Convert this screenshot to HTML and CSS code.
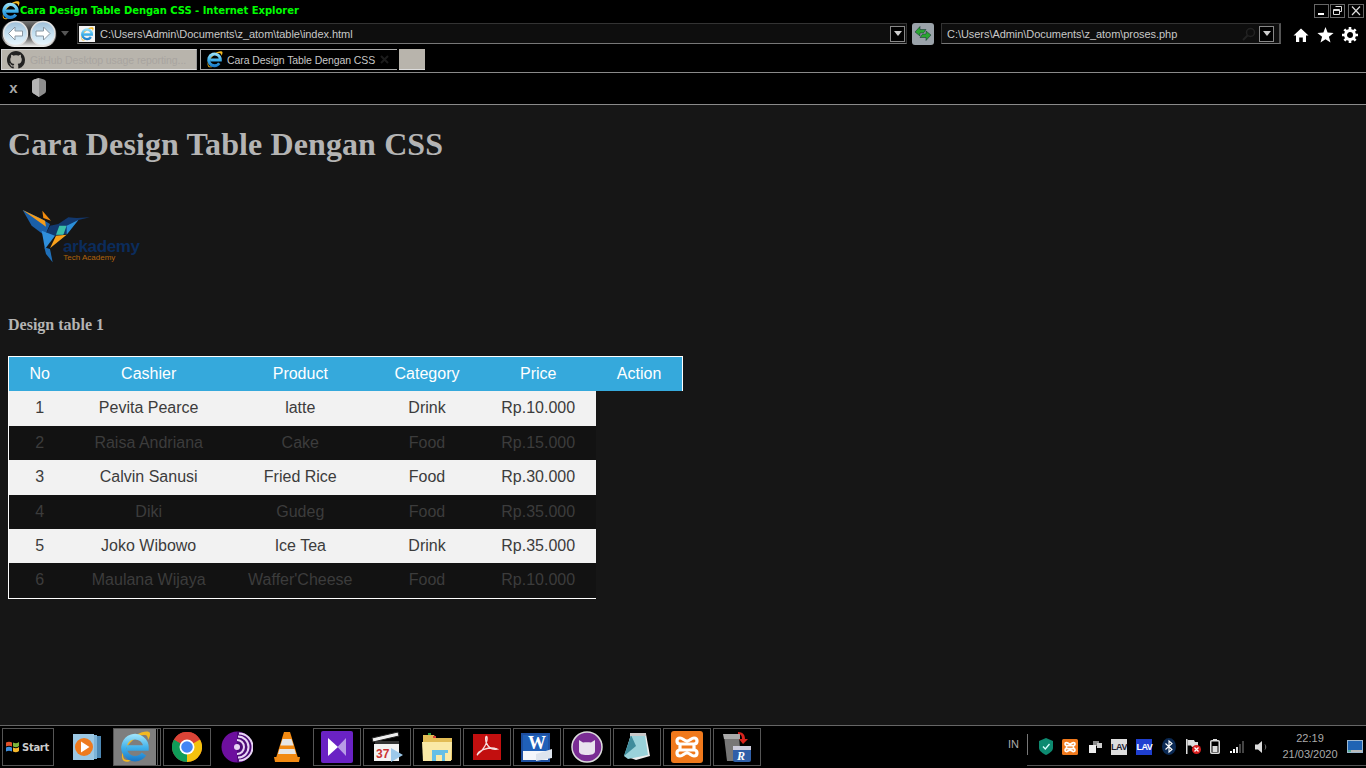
FILE: index.html
```html
<!DOCTYPE html>
<html lang="id">
<head>
<meta charset="utf-8">
<title>Cara Design Table Dengan CSS</title>
<link rel="stylesheet" href="styles.css">
</head>
<body>
<svg class="defs" width="0" height="0" aria-hidden="true">
  <defs>
    <linearGradient id="ieblue" gradientUnits="userSpaceOnUse" x1="0" y1="4" x2="0" y2="30"><stop offset="0" stop-color="#9be2fa"/><stop offset=".5" stop-color="#3fb0ea"/><stop offset="1" stop-color="#1a78c8"/></linearGradient>
    <linearGradient id="orb" x1="0" y1="0" x2="0" y2="1"><stop offset="0" stop-color="#9fbfd8"/><stop offset=".5" stop-color="#c4dff0"/><stop offset="1" stop-color="#eaf7ff"/></linearGradient>
    <linearGradient id="pill" x1="0" y1="0" x2="0" y2="1"><stop offset="0" stop-color="#777"/><stop offset=".5" stop-color="#222"/><stop offset="1" stop-color="#f2f2f2"/></linearGradient>
    <symbol id="ie" viewBox="0 0 32 32">
      <path d="M5 30 C1 27 3 19 9 11 C15 4 25 -1 30 1 C32 2 31 6 29 9 C29 6 28 4 26 4 C21 3 12 9 7 17 C4 22 3 27 6 28.500 C8 29.500 11 29 14 28 C10 31 7 31.500 5 30 Z" fill="#f2b821"/>
      <path d="M8 17 H27 A11 11 0 1 0 25 23" fill="none" stroke="url(#ieblue)" stroke-width="5.500"/>
    </symbol>
  </defs>
</svg>

<header class="titlebar">
  <svg class="title-icon" width="19" height="19"><use href="#ie"/></svg>
  <span class="title-text">Cara Design Table Dengan CSS - Internet Explorer</span>
  <div class="win-btns">
    <span class="win-btn"><svg width="13" height="12" viewBox="0 0 13 12"><rect x="3" y="8" width="6" height="2" fill="#fff"/></svg></span>
    <span class="win-btn"><svg width="13" height="12" viewBox="0 0 13 12"><path d="M4.500 1.500h6v5H8.500M2.500 4.500h6v5h-6z M2.500 5.500h6" fill="none" stroke="#ddd"/></svg></span>
    <span class="win-btn close"><svg width="14" height="12" viewBox="0 0 14 12"><path d="M3 1.500 L11 10 M11 1.500 L3 10" stroke="#ddd" stroke-width="1.200"/></svg></span>
  </div>
</header>

<nav class="navbar">
  <svg class="orbs" width="56" height="28" viewBox="0 0 56 28">
    <rect x=".5" y="1" width="55" height="26" rx="13" fill="url(#pill)"/>
    <circle cx="14.500" cy="13.500" r="12" fill="url(#orb)" stroke="#e4e4e4" stroke-width="1.500"/>
    <circle cx="42" cy="13.500" r="12" fill="url(#orb)" stroke="#e4e4e4" stroke-width="1.500"/>
    <path d="M7.500 13.500 L14 7 V11 H21.500 V16 H14 V20 Z" fill="#fff" stroke="#8a98a4" stroke-width="1"/>
    <path d="M49 13.500 L42.500 7 V11 H35 V16 H42.500 V20 Z" fill="#fff" stroke="#8a98a4" stroke-width="1"/>
  </svg>
  <svg class="nav-drop" width="8" height="5" viewBox="0 0 8 5"><path d="M0 0H8L4 5Z" fill="#555"/></svg>
  <div class="addr">
    <span class="page-icon"><svg width="14" height="14"><use href="#ie"/></svg></span>
    <span class="addr-text">C:\Users\Admin\Documents\z_atom\table\index.html</span>
    <span class="drop"><svg width="8" height="5" viewBox="0 0 8 5"><path d="M0 0H8L4 5Z" fill="#ccc"/></svg></span>
  </div>
  <span class="go">
    <svg width="20" height="20" viewBox="0 0 20 20"><path d="M2 8 L7 2.500 V5.500 H13 L10.500 9 H7 V12 Z" fill="#2aa632" stroke="#123" stroke-width=".5"/><path d="M18 11 L13 16.500 V13.500 H7 L9.500 10 H13 V7 Z" fill="#2aa632" stroke="#123" stroke-width=".5"/></svg>
  </span>
  <div class="search">
    <span class="search-text">C:\Users\Admin\Documents\z_atom\proses.php</span>
    <svg class="lens" width="14" height="14" viewBox="0 0 14 14"><circle cx="8.500" cy="5.500" r="4" fill="none" stroke="#222" stroke-width="1.500"/><path d="M5.500 8.500 L1 13" stroke="#222" stroke-width="2"/></svg>
    <span class="drop"><svg width="8" height="5" viewBox="0 0 8 5"><path d="M0 0H8L4 5Z" fill="#ccc"/></svg></span>
  </div>
  <div class="tools">
    <svg width="16" height="16" viewBox="0 0 16 16"><path d="M8 1.500 L15.500 8.500 H13 V15 H9.800 V10.500 H6.200 V15 H3 V8.500 H.5 Z" fill="#fff"/></svg>
    <svg width="17" height="16" viewBox="0 0 17 16"><path d="M8.500 0 L10.600 5.600 L16.600 5.900 L11.900 9.700 L13.500 15.500 L8.500 12.200 L3.500 15.500 L5.100 9.700 L.4 5.900 L6.400 5.600 Z" fill="#fff"/></svg>
    <svg width="16" height="16" viewBox="0 0 16 16"><circle cx="8" cy="8" r="4.500" fill="none" stroke="#fff" stroke-width="3"/><path d="M8 0V16M0 8H16M2.300 2.300L13.700 13.700M13.700 2.300L2.300 13.700" stroke="#fff" stroke-width="2.600" stroke-dasharray="3 10 3"/></svg>
  </div>
</nav>

<div class="tabs">
  <div class="tab inactive">
    <svg width="18" height="18" viewBox="0 0 16 16"><path fill="#222" d="M8 0C3.580 0 0 3.580 0 8c0 3.540 2.290 6.530 5.470 7.590.4.070.55-.17.55-.38 0-.19-.01-.82-.01-1.490-2.010.37-2.530-.49-2.690-.94-.09-.23-.48-.94-.82-1.130-.28-.15-.68-.52-.01-.53.63-.01 1.080.58 1.230.82.720 1.210 1.870.870 2.330.660.070-.520.280-.870.510-1.070-1.780-.2-3.640-.890-3.640-3.950 0-.870.310-1.590.820-2.150-.08-.2-.36-1.020.080-2.120 0 0 .670-.210 2.200.820.640-.180 1.320-.270 2-.270s1.360.090 2 .270c1.530-1.040 2.200-.820 2.200-.820.440 1.100.160 1.920.080 2.120.510.560.820 1.270.820 2.150 0 3.070-1.870 3.750-3.650 3.950.290.250.540.730.540 1.480 0 1.070-.010 1.930-.010 2.200 0 .210.150.460.550.380A8.010 8.010 0 0 0 16 8c0-4.420-3.580-8-8-8z"/></svg>
    <span class="tab-label">GitHub Desktop usage reporting...</span>
  </div>
  <div class="tab active">
    <svg width="17" height="17"><use href="#ie"/></svg>
    <span class="tab-label">Cara Design Table Dengan CSS</span>
    <svg class="tab-close" width="9" height="9" viewBox="0 0 9 9"><path d="M1 1L8 8M8 1L1 8" stroke="#1c1c1c" stroke-width="2"/></svg>
  </div>
  <div class="tab new"></div>
</div>

<div class="cmdbar">
  <span class="cmd-x">x</span>
  <svg width="14" height="19" viewBox="0 0 14 19"><path d="M7 0 L12 1.500 Q14 2.200 14 4 V13 Q14 14.500 12.500 15.500 L7 19 L1.500 15.500 Q0 14.500 0 13 V4 Q0 2.200 2 1.500 Z" fill="#8e8e8e"/><path d="M7 0 L2 1.500 Q0 2.200 0 4 V13 Q0 14.500 1.500 15.500 L7 19 Z" fill="#b4b4b4"/></svg>
</div>

<main class="page">
  <h1>Cara Design Table Dengan CSS</h1>
  <svg class="logo" width="150" height="112" viewBox="24 -30 450 336" role="img" aria-label="Arkademy">
    <polygon points="68,48 120,72 150,90 135,125 95,95" fill="#1a5fa8"/>
    <polygon points="68,48 135,80 138,98" fill="#f59c1a"/>
    <polygon points="127,50 153,80 130,72" fill="#f28c0f"/>
    <polygon points="150,95 175,90 205,70 230,72 270,70 235,78 200,120 168,125 135,125" fill="#12386e"/>
    <polygon points="178,95 200,95 190,122 168,122" fill="#3bbfa8"/>
    <polygon points="200,95 235,78 200,122" fill="#2b8fd8"/>
    <polygon points="168,125 200,122 150,163" fill="#f9a11b"/>
    <polygon points="125,110 165,125 135,165" fill="#2f8fdc"/>
    <polygon points="133,160 150,165 158,205 138,180" fill="#1f6fb8"/>
    <text class="logo-name" x="189" y="175">arkademy</text>
    <text class="logo-sub" x="190" y="198">Tech Academy</text>
  </svg>
  <h4>Design table 1</h4>
  <table class="data">
    <thead>
      <tr><th>No</th><th>Cashier</th><th>Product</th><th>Category</th><th>Price</th><th>Action</th></tr>
    </thead>
    <tbody>
      <tr><td>1</td><td>Pevita Pearce</td><td>latte</td><td>Drink</td><td>Rp.10.000</td></tr>
      <tr><td>2</td><td>Raisa Andriana</td><td>Cake</td><td>Food</td><td>Rp.15.000</td></tr>
      <tr><td>3</td><td>Calvin Sanusi</td><td>Fried Rice</td><td>Food</td><td>Rp.30.000</td></tr>
      <tr><td>4</td><td>Diki</td><td>Gudeg</td><td>Food</td><td>Rp.35.000</td></tr>
      <tr><td>5</td><td>Joko Wibowo</td><td>Ice Tea</td><td>Drink</td><td>Rp.35.000</td></tr>
      <tr><td>6</td><td>Maulana Wijaya</td><td>Waffer'Cheese</td><td>Food</td><td>Rp.10.000</td></tr>
    </tbody>
  </table>
</main>

<footer class="taskbar">
  <div class="task-left">
    <div class="start">
      <svg width="15" height="14" viewBox="0 0 15 14"><path d="M1 2.500 C3 1.500 5 1.500 7 2.500 V6.500 C5 5.500 3 5.500 1 6.500Z" fill="#e0522b"/><path d="M8 2.500 C10 3.500 12 3.500 14 2 V6 C12 7.500 10 7.500 8 6.500Z" fill="#7db63b"/><path d="M1 7.500 C3 6.500 5 6.500 7 7.500 V11.500 C5 10.500 3 10.500 1 11.500Z" fill="#3f8fdc"/><path d="M8 7.500 C10 8.500 12 8.500 14 7 V11 C12 12.500 10 12.500 8 11.500Z" fill="#f4b72c"/></svg>
      <span>Start</span>
    </div>
    <div class="slot first">
      <svg width="30" height="28" viewBox="0 0 30 28"><rect x="20" y="3" width="9" height="22" fill="#4d88b4"/><rect x="16" y="2" width="9" height="24" fill="#7eb4d8"/><rect x="1" y="1" width="21" height="26" fill="#9cc8e4"/><circle cx="12" cy="14" r="9" fill="#ee7a1e"/><path d="M9 8.500 L17.500 14 L9 19.500Z" fill="#fff"/></svg>
    </div>
    <div class="slot boxed current">
      <svg width="32" height="32"><use href="#ie"/></svg>
    </div>
    <div class="slot boxed">
      <svg width="30" height="30" viewBox="0 0 30 30"><circle cx="15" cy="15" r="15" fill="#db4437"/><path d="M15 15 L28 7.500 A15 15 0 0 1 15 30Z" fill="#f4c20d"/><path d="M15 15 L15 30 A15 15 0 0 1 2 7.500Z" fill="#0f9d58"/><path d="M2 7.500 A15 15 0 0 1 28 7.500 H15 A7.500 7.500 0 0 0 8.500 11.200Z" fill="#db4437"/><circle cx="15" cy="15" r="7.500" fill="#fff"/><circle cx="15" cy="15" r="5.800" fill="#4285f4"/></svg>
    </div>
    <div class="slot">
      <svg width="32" height="32" viewBox="0 0 32 32"><circle cx="16" cy="16" r="15.500" fill="#6d0f9e"/><path d="M16 1 A15 15 0 0 1 16 31Z" fill="#4d0a78"/><path d="M16 9 A7 7 0 0 1 16 23 M17 5.500 A10.500 10.500 0 0 1 17 26.500 M18 2.500 A13.500 13.500 0 0 1 18 29.500" fill="none" stroke="#e8d4f4" stroke-width="2"/><circle cx="16" cy="16" r="3" fill="#e8d4f4"/></svg>
    </div>
    <div class="slot">
      <svg width="28" height="32" viewBox="0 0 28 32"><path d="M11 1 H17 L25 27 H3Z" fill="#f28a12"/><path d="M9.500 8 H18.500 L20.500 14.500 H7.500Z" fill="#e6e6e6"/><path d="M6.500 18 H21.500 L23 23 H5Z" fill="#e6e6e6"/><path d="M1 26 H27 L26 31 H2Z" fill="#f28a12"/></svg>
    </div>
    <div class="slot boxed">
      <svg width="32" height="32" viewBox="0 0 32 32"><rect width="32" height="32" rx="2" fill="#6a22c4"/><path d="M7 7 L17 16 L7 25Z" fill="#fff"/><path d="M25 7 L16.500 16 L25 25Z" fill="#b79be6"/></svg>
    </div>
    <div class="slot boxed">
      <svg width="34" height="34" viewBox="0 0 34 34"><path d="M2 8 L28 2 L29 6 L3 12Z" fill="#eee" stroke="#222"/><path d="M5 11 H29 V14 H5Z" fill="#333"/><rect x="4" y="14" width="25" height="17" fill="#f3f3f3"/><text class="cal" x="6" y="28">37</text><path d="M21 18 L33 25 L21 32Z" fill="#9cc8ea"/></svg>
    </div>
    <div class="slot boxed">
      <svg width="32" height="30" viewBox="0 0 32 30"><path d="M2 3 H13 L15 6 H31 V28 H2Z" fill="#e2bc55"/><rect x="7" y="1" width="3" height="2" fill="#2f9e44"/><rect x="12" y="4" width="3" height="2" fill="#d9433a"/><path d="M1 10 H31 L30 29 H2Z" fill="#fae9a6"/><path d="M11 18 H27 V21 H24 V29 H21 V23 H15 V29 H11Z" fill="#65bfe6"/></svg>
    </div>
    <div class="slot boxed">
      <svg width="28" height="26" viewBox="0 0 28 26"><rect width="28" height="26" fill="#c20f0f"/><path d="M5 20 C10 17 15 8 14 3 C13 1 12 4 13 8 C15 13 19 16 24 15 C19 13 11 14 6 18 C4 20 4 22 5 20Z" fill="none" stroke="#f6dede" stroke-width="1.300"/></svg>
    </div>
    <div class="slot boxed">
      <svg width="32" height="30" viewBox="0 0 32 30"><rect x="1" y="2" width="27" height="27" fill="#f3f6fb" stroke="#1d4fa0" stroke-width="2"/><rect x="2" y="3" width="25" height="16" fill="#2060b8"/><text class="word" x="7" y="17">W</text><path d="M15 22 L31 17 V26 L15 29Z" fill="#dde4ee"/></svg>
    </div>
    <div class="slot boxed">
      <svg width="32" height="32" viewBox="0 0 32 32"><circle cx="16" cy="16" r="15" fill="#7a2d94" stroke="#ddd" stroke-width="1.500"/><path d="M8 9 L12 11.500 C14.500 11 17.500 11 20 11.500 L24 9 V20 C24 23 21 24 16 24 C11 24 8 23 8 20Z" fill="#e9e3ee"/></svg>
    </div>
    <div class="slot boxed">
      <svg width="30" height="30" viewBox="0 0 30 30"><path d="M9 2 H24 L28 24 L14 28 L3 24 Z" fill="#eee"/><path d="M9 3 H23 L26 23 L6 27 L2 24 Z" fill="#9ad2da"/><path d="M9 3 L14 14 L2 24Z" fill="#3f8c9c"/><path d="M8 1 H24 V4 H8Z" fill="#c9c9c9"/></svg>
    </div>
    <div class="slot boxed">
      <svg width="32" height="32" viewBox="0 0 32 32"><rect width="32" height="32" rx="3" fill="#f0791c"/><path d="M9 7 C5 7 5 13 9 13 H23 C27 13 27 7 23 7 C20 7 19 10 16 10 C13 10 12 7 9 7Z M9 19 C5 19 5 25 9 25 C12 25 13 22 16 22 C19 22 20 25 23 25 C27 25 27 19 23 19Z M9 13 V19 M23 13 V19" fill="none" stroke="#fff" stroke-width="3.200"/></svg>
    </div>
    <div class="slot boxed">
      <svg width="30" height="32" viewBox="0 0 30 32"><path d="M2 5 H17 L19 30 H5Z" fill="#777"/><path d="M1 3 H18 V8 H2Z" fill="#aaa"/><rect x="11" y="17" width="18" height="14" rx="2" fill="#2f5fa8"/><rect x="11" y="15" width="18" height="4" fill="#ccd"/><text class="r" x="15" y="29">R</text><path d="M16 1 C22 1 23 5 23 8 H26 L21 13 L17 8 H20 C20 5 19 3 16 3Z" fill="#d9231d"/></svg>
    </div>
  </div>
  <div class="task-right">
    <span class="lang">IN</span>
    <div class="notify">
      <span class="tray-sep"></span>
      <div class="tray">
        <svg width="14" height="17" viewBox="0 0 14 17"><path d="M7 0 L14 3 V10 C14 13 10 15.500 7 17 C4 15.500 0 13 0 10 V3Z" fill="#0d8a70"/><path d="M4 8.500 L6.300 11 L10.500 6" fill="none" stroke="#dff" stroke-width="1.300"/></svg>
        <svg width="16" height="16" viewBox="0 0 32 32"><rect width="32" height="32" rx="3" fill="#f0791c"/><path d="M9 7 C5 7 5 13 9 13 H23 C27 13 27 7 23 7 C20 7 19 10 16 10 C13 10 12 7 9 7Z M9 19 C5 19 5 25 9 25 C12 25 13 22 16 22 C19 22 20 25 23 25 C27 25 27 19 23 19Z M9 13 V19 M23 13 V19" fill="none" stroke="#fff" stroke-width="3.500"/></svg>
        <svg width="14" height="14" viewBox="0 0 14 14"><rect x="5" y="1" width="6" height="5" fill="#888"/><rect x="9" y="3" width="5" height="5" fill="#ccc"/><rect x="1" y="5" width="7" height="8" fill="#eee"/></svg>
        <span class="lav light">LAV</span>
        <span class="lav blue">LAV</span>
        <svg width="14" height="17" viewBox="0 0 14 17"><ellipse cx="7" cy="8.500" rx="7" ry="8.500" fill="#0b2a55"/><path d="M3.500 5.500 L10 11.500 L7 14 V3 L10 5.500 L3.500 11.500" fill="none" stroke="#fff" stroke-width="1.100"/></svg>
        <svg width="16" height="17" viewBox="0 0 16 17"><rect x="1" y="1" width="1.500" height="15" fill="#ddd"/><path d="M2.500 2 H9 L10 4 H13 V9 H7 L6 7.500 H2.500Z" fill="#ddd"/><circle cx="11.500" cy="11.500" r="4.500" fill="#d92020"/><path d="M9.500 9.500L13.500 13.500M13.500 9.500L9.500 13.500" stroke="#fff" stroke-width="1.300"/></svg>
        <svg width="10" height="15" viewBox="0 0 10 15"><rect x="3" y="0" width="4" height="2" fill="#ddd"/><rect x=".75" y="1.750" width="8.500" height="12.500" rx="1" fill="none" stroke="#ddd" stroke-width="1.500"/><rect x="2.500" y="7" width="5" height="6" fill="#ddd"/></svg>
        <svg width="16" height="12" viewBox="0 0 16 12"><rect x="0" y="10" width="2" height="2" fill="#fff"/><rect x="3" y="8" width="2" height="4" fill="#fff"/><rect x="6" y="6" width="2" height="6" fill="#ddd"/><rect x="9" y="3" width="2" height="9" fill="#444"/><rect x="12" y="0" width="2" height="12" fill="#444"/></svg>
        <svg width="13" height="14" viewBox="0 0 13 14"><path d="M0 4.500 H3 L7 1 V13 L3 9.500 H0Z" fill="#ddd"/><path d="M10 4.500 C11 6 11 8 10 9.500" fill="none" stroke="#777"/></svg>
      </div>
      <div class="clock"><span>22:19</span><span>21/03/2020</span></div>
      <svg class="desk" width="16" height="13" viewBox="0 0 16 13"><rect width="16" height="13" fill="#9db8d0"/><rect x="1" y="1" width="14" height="9" fill="#1f64b4"/><rect x="1" y="10" width="14" height="2" fill="#bbb"/><rect x="1" y="10" width="3" height="2" fill="#5a9"/></svg>
    </div>
  </div>
</footer>
</body>
</html>
```
FILE: styles.css
```css
* { box-sizing: border-box; }
html, body { height: 100%; }
body {
  margin: 0;
  height: 768px;
  overflow: hidden;
  display: flex;
  flex-direction: column;
  background: #000;
  font-family: "Liberation Sans", Arial, sans-serif;
}
svg { flex: none; }
.defs { display: block; height: 0; }

.titlebar { height: 20px; display: flex; align-items: center; flex: none; padding-left: 1px; }
.title-icon { margin-top: 1px; }
.title-text { color: #0f0; font: bold 10px "DejaVu Sans", sans-serif; letter-spacing: -.04px; white-space: nowrap; }
.win-btns { margin-left: auto; display: flex; gap: 1px; padding-right: 2px; margin-top: 1px; }
.win-btn { width: 15px; height: 14px; border: 1px solid #666; display: flex; align-items: center; justify-content: center; }
.win-btn.close { margin-left: 2px; width: 16px; }

.navbar { height: 27px; flex: none; display: flex; align-items: center; padding-left: 1px; }
.nav-drop { margin: 0 8px 0 4px; }
.addr { width: 830px; height: 21px; border: 1px solid #333; border-bottom-color: #777; display: flex; align-items: center; background: #0e0e0e; flex: none; }
.page-icon { width: 16px; height: 16px; margin: 0 5px 0 1px; background: #f4f4f4; display: flex; justify-content: center; align-items: center; flex: none; }
.addr-text, .search-text { color: #c8c8c8; font-size: 11px; letter-spacing: -.05px; white-space: nowrap; }
.search-text { margin-left: 5px; }
.drop { width: 15px; height: 16px; border: 1px solid #888; background: #000; display: flex; align-items: center; justify-content: center; flex: none; margin-left: auto; margin-right: 1px; }
.go { width: 22px; height: 22px; margin-left: 5px; border-radius: 3px; background: #9aa2a9; display: flex; align-items: center; justify-content: center; flex: none; }
.search { width: 340px; height: 21px; margin-left: 7px; border: 1px solid #333; border-bottom-color: #777; border-right: 2px solid #555; background: #0e0e0e; display: flex; align-items: center; flex: none; }
.lens { margin-left: auto; }
.search .drop { margin-left: 3px; margin-right: 5px; }
.tools { display: flex; align-items: center; gap: 8px; margin-left: 12px; margin-top: 2px; }

.tabs { height: 26px; flex: none; display: flex; align-items: flex-start; padding: 2px 0 0 1px; border-bottom: 1px solid #8a8a8a; }
.tab { height: 21px; display: flex; align-items: center; flex: none; }
.tab-label { font-size: 10.5px; letter-spacing: -.08px; white-space: nowrap; }
.inactive { width: 196px; background: #b8b4ac; padding-left: 5px; gap: 5px; border: 1px solid #ccc; border-color: #d0d0d0 #999 #ddd #d0d0d0; }
.inactive .tab-label { color: #a8a4a0; }
.active { width: 197px; margin-left: 3px; padding-left: 5px; gap: 4px; background: #000; border-top: 1px solid #aaa; border-left: 1px solid #aaa; border-bottom: 1px solid #aaa; }
.active .tab-label { color: #c8c8c8; }
.tab-close { margin-left: 1px; }
.new { width: 26px; margin-left: 2px; background: #b8b4ac; border-bottom: 1px solid #ddd; }

.cmdbar { height: 32px; flex: none; display: flex; align-items: center; gap: 13px; padding: 0 0 3px 8px; border-bottom: 1px solid #8a8a8a; }
.cmd-x { color: #a8a8a8; font: bold 15px "Liberation Sans", sans-serif; width: 11px; text-align: center; }

.page { flex: 1; min-height: 0; background: #161616; padding: .1px 8px 0; font-family: "Liberation Serif", serif; color: #b4b4b4; }
h1 { font-size: 32px; margin: 21px 0; line-height: 37px; font-weight: bold; letter-spacing: .11px; }
.logo { display: block; }
.logo-name { font: bold 51px "Liberation Sans", sans-serif; fill: #0b2c5c; letter-spacing: -1px; }
.logo-sub { font: 24px "Liberation Sans", sans-serif; fill: #b0630c; }
h4 { font-size: 16px; margin: 20px 0 21.7px; line-height: 18px; font-weight: bold; }

.data { border-collapse: collapse; width: 675px; font-family: "Liberation Sans", sans-serif; font-size: 16px; line-height: 18.43px; text-align: center; }
.data th { background: #35a9dc; color: #fff; font-weight: normal; padding: 8px 20px; border-top: 1px solid #fff; }
.data th:first-child, .data td:first-child { border-left: 1px solid #fff; }
.data th:last-child { border-right: 1px solid #fff; }
.data td { padding: 8px 20px; color: #3c3c3c; background: #121212; white-space: nowrap; }
.data tbody tr:last-child td { border-bottom: 1px solid #fff; }
.data tbody tr:nth-child(odd) td { background: #f2f2f2; }

.taskbar { height: 43px; flex: none; border-top: 1px solid #666; display: flex; justify-content: space-between; padding: 2px 0 2px 2px; }
.task-left { display: flex; gap: 2px; height: 38px; }
.start { width: 52px; border: 1px solid #555; display: flex; align-items: center; gap: 2px; padding-left: 2px; color: #ccc; font: bold 10px "DejaVu Sans", sans-serif; letter-spacing: -.3px; }
.slot { width: 48px; border: 1px solid transparent; display: flex; align-items: center; justify-content: center; }
.slot.first { margin-left: 7px; }
.boxed { border-color: #555; }
.current { justify-content: flex-start; padding-left: 5px; background: linear-gradient(#7e7e7e, #7e7e7e) 0 0 / 42px 100% no-repeat, linear-gradient(#555, #555) 43px 0 / 1px 100% no-repeat; }
.cal { font: bold 12px "Liberation Sans", sans-serif; fill: #c33; }
.word { font: bold 18px "Liberation Serif", serif; fill: #fff; }
.r { font: italic bold 12px "Liberation Serif", serif; fill: #fff; }
.task-right { display: flex; align-items: flex-start; height: 38px; }
.lang { color: #aaa; font-size: 11px; line-height: 13px; margin: 10px 8px 0 0; }
.notify { display: flex; align-items: center; height: 38px; padding-right: 3px; border-bottom: 1px solid #555; }
.tray-sep { width: 1px; height: 21px; background: #777; align-self: flex-start; margin-top: 6px; }
.tray { display: flex; align-items: center; justify-content: space-between; width: 241px; height: 24px; padding: 0 1px 0 11px; }
.lav { width: 16px; height: 16px; font: bold 9px "Liberation Sans", sans-serif; display: flex; align-items: center; justify-content: center; letter-spacing: -.5px; }
.lav.light { background: #ddd; color: #223; }
.lav.blue { background: #1f3fd0; color: #fff; }
.clock { width: 74px; margin-left: 4px; display: flex; flex-direction: column; align-items: center; gap: 3px; color: #aaa; font-size: 11px; line-height: 13px; }
.desk { flex: none; }
```
